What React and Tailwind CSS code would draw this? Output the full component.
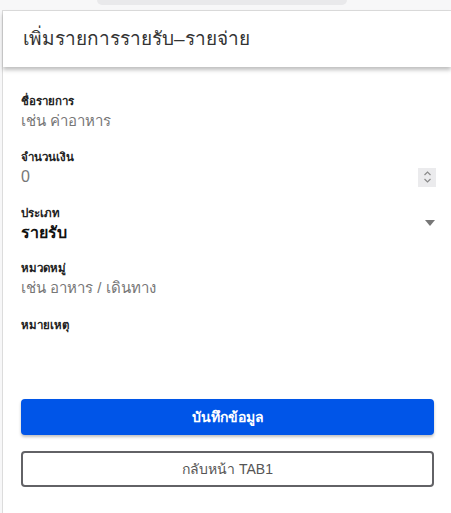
import React, { useState } from "react";

const Field = ({ label, children }) => (
  <div className="flex flex-col">
    <label className="h-[16px] text-[11.5px] leading-[16px] font-semibold text-[#222]">{label}</label>
    {children}
  </div>
);

const App = () => {
  const [form, setForm] = useState({
    name: "",
    amount: "",
    type: "รายรับ",
    category: "",
    note: "",
  });

  const update = (key) => (e) => setForm({ ...form, [key]: e.target.value });

  return (
    <div className="min-h-[513px] bg-[#f7f7f8] font-['Liberation_Sans',sans-serif]">
      <div className="flex h-[10px] justify-center">
        <div className="ml-[-8px] h-[5px] w-[250px] rounded-b-[10px] bg-[#e9e9eb]" />
      </div>
      <div className="ml-[2px] min-h-[503px] border-l border-t border-[#dcdcdc] bg-white">
        <div className="flex h-[56px] items-center px-[20px] shadow-[0_3px_4px_rgba(0,0,0,0.25)]">
          <h1 className="text-[19px] leading-[24px] text-[#333]">เพิ่มรายการรายรับ–รายจ่าย</h1>
        </div>

        <form className="flex flex-col pl-[18px] pr-[17px] pt-[26px]" onSubmit={(e) => e.preventDefault()}>
          <Field label="ชื่อรายการ">
            <input
              value={form.name}
              onChange={update("name")}
              placeholder="เช่น ค่าอาหาร"
              className="h-[24px] text-[15px] leading-[24px] text-[#222] placeholder:text-[#777] outline-none"
            />
          </Field>

          <div className="mt-[16px]">
            <Field label="จำนวนเงิน">
              <div className="flex h-[24px] items-center">
                <span className="flex-1 text-[16px] leading-[24px] text-[#777]">0</span>
                <span className="mr-[-2px] flex h-[19px] w-[18px] flex-col items-center justify-center bg-[#ebebed] text-[#8a8a8a]">
                  <svg width="9" height="14" viewBox="0 0 9 14" fill="none" stroke="currentColor" strokeWidth="1.2">
                    <path d="M1.5 5 L4.5 2 L7.5 5" />
                    <path d="M1.5 9 L4.5 12 L7.5 9" />
                  </svg>
                </span>
              </div>
            </Field>
          </div>

          <div className="mt-[16px]">
            <Field label="ประเภท">
              <div className="relative flex h-[24px] items-center">
                <span className="flex-1 text-[16px] leading-[24px] font-semibold text-[#111]">{form.type}</span>
                <svg className="absolute right-[-1px] top-[-1px]" width="10" height="6" viewBox="0 0 10 6">
                  <path d="M0 0 H10 L5 6 Z" fill="#777" />
                </svg>
              </div>
            </Field>
          </div>

          <div className="mt-[15px]">
            <Field label="หมวดหมู่">
              <input
                value={form.category}
                onChange={update("category")}
                placeholder="เช่น อาหาร / เดินทาง"
                className="h-[24px] text-[15px] leading-[24px] text-[#222] placeholder:text-[#777] outline-none"
              />
            </Field>
          </div>

          <div className="mt-[17px]">
            <Field label="หมายเหตุ">
              <textarea
                value={form.note}
                onChange={update("note")}
                className="h-[50px] resize-none text-[15px] outline-none"
              />
            </Field>
          </div>

          <button
            type="submit"
            className="mt-[16px] h-[36px] rounded-[4px] bg-[#0055e8] text-[14px] font-semibold text-white shadow-[0_2px_3px_rgba(0,0,0,0.25)]"
          >
            บันทึกข้อมูล
          </button>
          <button
            type="button"
            className="mt-[16px] h-[36px] rounded-[4px] border-2 border-[#626266] bg-white text-[14px] text-[#555]"
          >
            กลับหน้า TAB1
          </button>
        </form>
      </div>
    </div>
  );
};

export default App;
